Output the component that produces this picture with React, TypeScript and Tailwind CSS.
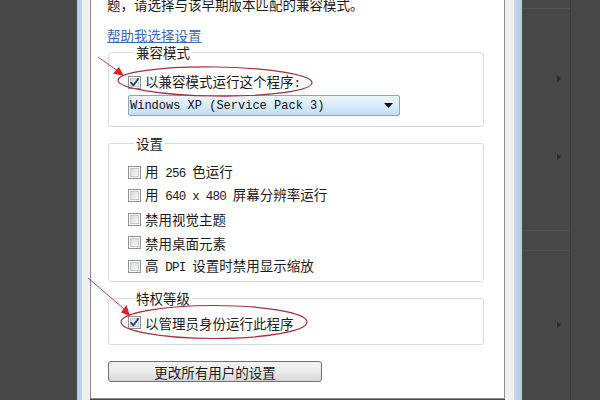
import React from "react";

const cjk = { fontFamily: '"Noto Sans CJK SC", "Noto Sans", sans-serif' };
const mono = { fontFamily: '"Liberation Mono", monospace' };

function M({ children }: { children: React.ReactNode }) {
  return (
    <span className="text-[12.5px] tracking-[-0.75px]" style={mono}>
      {children}
    </span>
  );
}

function Box({ checked = false }: { checked?: boolean }) {
  return (
    <span className="relative flex h-[13px] w-[13px] shrink-0 border border-[#8e8f8f] bg-white p-[1px]">
      <span className="block h-full w-full border border-[#c5c8cc] bg-linear-to-br from-[#d9dcdf] to-[#f7f7f7]" />
      {checked && (
        <svg className="absolute left-[0px] top-[0px]" width="11" height="11" viewBox="0 0 11 11">
          <path d="M2 5.6 L4.4 8.4 L9.2 1.8" fill="none" stroke="#22447e" strokeWidth="1.8" strokeLinecap="round" strokeLinejoin="round" />
        </svg>
      )}
    </span>
  );
}

function Row({ checked, children }: { checked?: boolean; children: React.ReactNode }) {
  return (
    <div className="flex h-[16px] items-center gap-[4px] whitespace-nowrap">
      <Box checked={checked} />
      <span className="leading-[16px]">{children}</span>
    </div>
  );
}

function Group({ title, className, children }: { title: string; className?: string; children: React.ReactNode }) {
  return (
    <fieldset className={"ml-[17px] w-[376px] rounded-[3px] border border-[#d5dadf] pl-[19px] " + (className ?? "")}>
      <legend className="ml-[6px] px-[2px] leading-[16px]">{title}</legend>
      {children}
    </fieldset>
  );
}

export default function App() {
  return (
    <div className="relative flex h-[400px] w-[600px] overflow-hidden bg-[#474747] text-[13.5px] text-[#1b1b1b]" style={cjk}>
      <div className="w-[77px] shrink-0 bg-[#474747]" />
      <div className="w-[5px] shrink-0 bg-linear-to-r from-[#b4cbe4] to-[#c3d7ec]" />
      <div className="w-[8px] shrink-0 bg-[#f0f0f0]" />
      <div className="h-[399px] w-[415px] shrink-0 border-x border-b border-[#8d8d8d] bg-white">
        <div className="-mt-[4px] pl-[16px] leading-[16px]">题，请选择与该早期版本匹配的兼容模式。</div>
        <div className="mt-[16px] pl-[16px] leading-[14px] text-[#3c69ad] underline decoration-[#3c69ad] underline-offset-[1px]">
          帮助我选择设置
        </div>
        <Group title="兼容模式" className="mt-[2px] pb-[10px]">
          <div className="mt-[14px]">
            <Row checked>
              以兼容模式运行这个程序<M>:</M>
            </Row>
          </div>
          <div className="mt-[5px] flex h-[21px] w-[272px] items-center justify-between rounded-[2px] border border-[#84a7c6] bg-linear-to-b from-[#eef6fd] via-[#d9ebf9] to-[#c2def4] pl-[1px] pr-[6px]">
            <span className="text-[12px] text-[#111]" style={mono}>
              Windows XP (Service Pack 3)
            </span>
            <svg width="9" height="5" viewBox="0 0 9 5">
              <path d="M0 0 H9 L4.5 5 Z" fill="#111" />
            </svg>
          </div>
        </Group>
        <Group title="设置" className="mt-[8px] pb-[7px]">
          <div className="mt-[13px] flex flex-col gap-[7.5px]">
            <Row>
              用<M> 256 </M>色运行
            </Row>
            <Row>
              用<M> 640 x 480 </M>屏幕分辨率运行
            </Row>
            <Row>禁用视觉主题</Row>
            <Row>禁用桌面元素</Row>
            <Row>
              高<M> DPI </M>设置时禁用显示缩放
            </Row>
          </div>
        </Group>
        <Group title="特权等级" className="mt-[8px] pb-[13.5px]">
          <div className="mt-[8.5px]">
            <Row checked>以管理员身份运行此程序</Row>
          </div>
        </Group>
        <button className="ml-[17px] mt-[16px] flex h-[21px] w-[214px] items-center justify-center rounded-[3px] border border-[#707070] bg-linear-to-b from-[#f3f3f3] via-[#ebebeb] to-[#d6d6d6] leading-[16px] text-[#1b1b1b]">
          更改所有用户的设置
        </button>
      </div>
      <div className="h-full w-[9px] shrink-0 bg-[#f0f0f0]" />
      <div className="w-[8px] shrink-0 bg-linear-to-r from-[#c3d7ec] to-[#b4cbe4]" />
      <div className="flex flex-1">
        <div className="relative w-[48px] bg-[#484848]">
          <div className="mt-[8px] h-px w-full bg-[#525252]" />
          <div className="mt-[221px] h-px w-full bg-[#4f4f4f]" />
          <div className="mt-[19px] h-px w-full bg-[#4f4f4f]" />
          <svg className="absolute left-[35px] top-[75px]" width="4" height="7" viewBox="0 0 4 7">
            <path d="M0 0 L4 3.5 L0 7 Z" fill="#2e2e2e" />
          </svg>
          <svg className="absolute left-[35px] top-[153px]" width="4" height="7" viewBox="0 0 4 7">
            <path d="M0 0 L4 3.5 L0 7 Z" fill="#2e2e2e" />
          </svg>
          <svg className="absolute left-[35px] top-[321px]" width="4" height="7" viewBox="0 0 4 7">
            <path d="M0 0 L4 3.5 L0 7 Z" fill="#2e2e2e" />
          </svg>
        </div>
        <div className="w-px bg-[#3b3b3b]" />
        <div className="flex-1 bg-[#464646]" />
      </div>

      <svg className="pointer-events-none absolute left-0 top-0" width="600" height="400" viewBox="0 0 600 400">
        <ellipse cx="215" cy="81.5" rx="97" ry="14.5" fill="none" stroke="#a3303d" strokeWidth="1.2" transform="rotate(0.8 215 81.5)" />
        <ellipse cx="214" cy="322" rx="93" ry="16.5" fill="none" stroke="#a3303d" strokeWidth="1.2" />
        <line x1="98" y1="57" x2="118" y2="71" stroke="#b03040" strokeWidth="0.9" />
        <path d="M124 76 L113 73.5 L119 67 Z" fill="#e0202c" />
        <line x1="88" y1="278" x2="124" y2="309" stroke="#b03040" strokeWidth="0.9" />
        <path d="M130 316 L121 312.5 L126.5 305 Z" fill="#e0202c" />
      </svg>
    </div>
  );
}
